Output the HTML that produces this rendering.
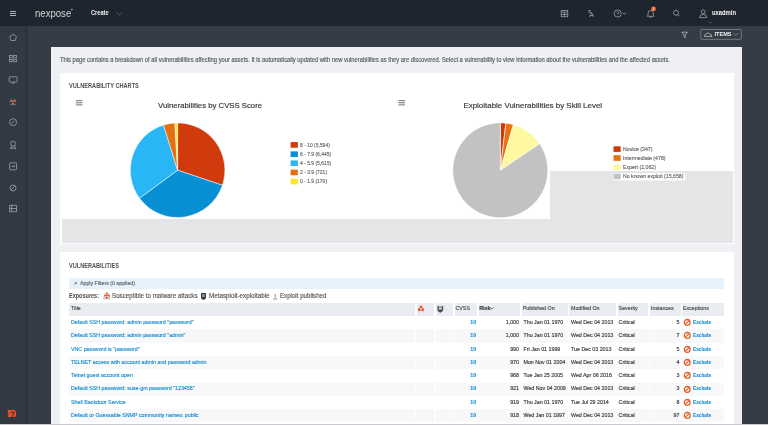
<!DOCTYPE html>
<html><head><meta charset="utf-8">
<style>
*{margin:0;padding:0;box-sizing:border-box}
html,body{width:768px;height:425px;overflow:hidden;background:#353c46;font-family:"Liberation Sans",sans-serif}
body{filter:blur(0.3px)}
.a{position:absolute;white-space:nowrap;-webkit-text-stroke:0.15px currentColor}
#hdr{position:absolute;left:0;top:0;width:768px;height:25.5px;background:#1f252e}
#side{position:absolute;left:0;top:25.5px;width:25px;height:400px;background:#323942}
#sidestrip{position:absolute;left:25px;top:25.5px;width:3px;height:400px;background:#2e343d}
#panel{position:absolute;left:51px;top:47px;width:691px;height:378px;background:#eef0f3}
.card{position:absolute;left:60px;width:674px;background:#fff}
.t{color:#555;font-size:5.3px;line-height:5.3px}
.lnk{color:#1b8ed3}
.hd{color:#555;font-size:5.3px;line-height:5.3px}
.row{position:absolute;left:69px;width:655px;height:13.5px}
.row.g{background:#f6f8fa}
.sep{position:absolute;top:0;width:1px;height:100%;background:#fff}
</style></head><body>
<div id="hdr"></div>
<div id="side"></div>
<div id="sidestrip"></div>

<!-- header left -->
<svg class="a" style="left:0;top:0" width="130" height="25">
  <g fill="#aab0b8"><rect x="10" y="11" width="6" height="1"/><rect x="10" y="13" width="6" height="1"/><rect x="10" y="15" width="6" height="1"/></g>
  <circle cx="71.9" cy="9.6" r="0.8" fill="#bbb"/>
  <path d="M116.5 12.5 L119.3 15 L122.1 12.5" stroke="#5a616b" stroke-width="0.8" fill="none"/>
</svg>
<div class="a" style="-webkit-text-stroke:0;left:34.7px;top:8.6px;font-size:10.2px;line-height:10.2px;color:#d4d7db;transform:scaleX(0.94);transform-origin:0 0">nexpose</div>
<div class="a" style="-webkit-text-stroke:0;left:90.8px;top:9.5px;font-size:6.8px;line-height:6.8px;transform:scaleX(0.83);transform-origin:0 0;color:#eceef0;font-weight:bold">Create</div>

<!-- header right icons -->
<svg class="a" style="left:540;top:0;left:540px" width="228" height="26">
  <g stroke="#aab0b7" stroke-width="0.7" fill="none">
    <!-- table icon -->
    <rect x="21.2" y="10.4" width="6.6" height="6.4"/>
    <line x1="21.2" y1="12.2" x2="27.8" y2="12.2"/><line x1="24.5" y1="12.2" x2="24.5" y2="16.8"/><line x1="21.2" y1="14.5" x2="27.8" y2="14.5"/>
    <!-- translate -->
    <path d="M48.2 10.6 h2.6 M49.5 10.6 v1.2 M48.4 12.2 q1.4 1.6 2.6 0"/>
    <path d="M49.6 17 l2 -4.4 l2 4.4 M50.4 15.5 h2.4"/>
    <!-- help -->
    <circle cx="77.7" cy="13.5" r="3.6"/>
    <path d="M76.5 12.5 q1.2 -1.8 2.4 0 q0 1 -1.2 1.5 v0.6"/>
    <path d="M82.5 12.6 l1.8 1.6 l1.8 -1.6"/>
    <!-- bell -->
    <path d="M107.2 16.3 q0.9 -0.6 0.9 -2.3 v-0.8 q0 -2.8 2.6 -2.9 q2.6 0.1 2.6 2.9 v0.8 q0 1.7 0.9 2.3 z M109.6 17.2 h2.2"/>
    <!-- search -->
    <circle cx="136" cy="12.8" r="2.5"/><line x1="137.8" y1="14.6" x2="139.6" y2="16.4"/>
    <!-- user -->
    <circle cx="163.2" cy="11.8" r="1.9"/>
    <path d="M159.6 17.6 q0 -3.2 3.6 -3.2 q3.6 0 3.6 3.2 z"/>
    <path d="M168.3 21.4 l2 1.8 l2 -1.8" stroke="#59606a"/>
  </g>
  <circle cx="113.5" cy="8.9" r="2.4" fill="#ec6a35"/><path d="M112.9 7.8 h1.2 l-1.2 2 h1.3" stroke="#fde" stroke-width="0.5" fill="none"/>
</svg>
<div class="a" style="-webkit-text-stroke:0;left:712px;top:9.6px;font-size:6.6px;line-height:6.6px;transform:scaleX(0.885);transform-origin:0 0;color:#f4f4f4;font-weight:bold">uxadmin</div>

<!-- toolbar -->
<svg class="a" style="left:670px;top:25px" width="98" height="22">
  <path d="M11.8 7.2 h5.6 l-2.2 2.8 v2.6 l-1.2 -0.8 v-1.8 z" stroke="#b0b5bc" stroke-width="0.8" fill="none"/>
  <rect x="30.8" y="4.5" width="40.5" height="9.8" rx="0.8" stroke="#838992" stroke-width="0.8" fill="none"/>
  <path d="M34.3 11.4 h7.6 q-0.2 -2.2 -2 -2.3 q-1 -1.4 -2.4 -0.9 q-2.4 0.2 -3.2 3.2 z" stroke="#c5c9ce" stroke-width="0.8" fill="none"/>
  <path d="M63.5 8.3 l2.2 2 l2.2 -2" stroke="#9aa0a8" stroke-width="0.8" fill="none"/>
</svg>
<div class="a" style="-webkit-text-stroke:0;left:714.5px;top:31.5px;font-size:5.6px;line-height:5.6px;color:#f0f0f0;font-weight:bold">ITEMS</div>

<!-- sidebar icons -->
<svg class="a" style="left:0;top:25px" width="26" height="400">
  <g stroke="#a3a9b1" stroke-width="0.75" fill="none">
    <path d="M13.1 9.2 l3.4 2.5 l-1.3 3.8 h-4.2 l-1.3 -3.8 z"/>
    <rect x="9.6" y="30.5" width="2.6" height="2.4"/><rect x="13.8" y="30.5" width="2.6" height="2.4"/>
    <rect x="9.6" y="34.4" width="2.6" height="2.4"/><rect x="13.8" y="34.4" width="2.6" height="2.4"/>
    <rect x="9.2" y="51.8" width="7.8" height="5.2" rx="0.6"/><line x1="11.5" y1="58.2" x2="14.7" y2="58.2"/>
    <circle cx="13.1" cy="97.2" r="3.5"/><path d="M11.5 98.8 l3.2 -3.2"/>
    <circle cx="13.1" cy="118.6" r="2.5"/><path d="M11.6 120.8 l-1 3 l2.5 -1 l2.5 1 l-1 -3"/>
    <rect x="9.7" y="137.8" width="6.8" height="7" rx="0.8"/><path d="M11.7 141.5 h2.8 v-1.5"/>
    <circle cx="13.1" cy="163" r="3"/><path d="M11.2 164.8 l3.8 -3.8"/>
    <rect x="9.7" y="180.3" width="6.8" height="6.5"/><line x1="11.8" y1="180.3" x2="11.8" y2="186.8"/><line x1="9.7" y1="183.5" x2="16.5" y2="183.5"/>
  </g>
  <g>
    <path d="M11.3 73.6 L9.8 77.5 M14.5 73.6 L16 77.5 M10 79.7 h5.9" stroke="#8a9099" stroke-width="0.7" fill="none"/>
    <rect x="10.8" y="75.4" width="4.4" height="1.4" fill="#ee6a36"/>
    <rect x="12" y="77.9" width="2" height="1.1" fill="#ee6a36"/>
  </g>
  <path d="M7.8 385 H14 Q16.1 385 16.1 387.6 V389.4 Q16.1 392 13.5 392 H7.8 Z" fill="#f04e1c"/>
  <path d="M10.2 387.2 h4 l-2.2 4.8" stroke="#323942" stroke-width="1.1" fill="none"/>
  <rect x="7.6" y="388.6" width="1.2" height="1" fill="#323942"/>
</svg>

<!-- panel -->
<div id="panel"></div>
<div class="a t" style="left:60.2px;top:57.3px;font-size:6.3px;line-height:6.3px;transform:scaleX(0.918);transform-origin:0 0;color:#55595e">This page contains a breakdown of all vulnerabilities affecting your assets. It is automatically updated with new vulnerabilities as they are discovered. Select a vulnerability to view information about the vulnerabilities and the affected assets.</div>

<!-- charts card -->
<div class="card" style="top:72.5px;height:171.5px"></div>
<div class="a" style="-webkit-text-stroke:0;left:69.2px;top:82.5px;font-size:6.9px;line-height:6.9px;transform:scaleX(0.816);transform-origin:0 0;color:#505050;font-weight:bold">VULNERABILITY CHARTS</div>

<div class="a" style="left:62px;top:219px;width:671px;height:24px;background:#e4e5e7"></div>
<div class="a" style="left:550px;top:170.8px;width:183px;height:48.2px;background:#e4e5e7"></div>

<svg class="a" style="left:0;top:0" width="768" height="425">
  <g fill="#6e7378">
    <rect x="75.8" y="100.2" width="6.6" height="1"/><rect x="75.8" y="102.3" width="6.6" height="1"/><rect x="75.8" y="104.4" width="6.6" height="1"/>
    <rect x="398.4" y="100.2" width="6.6" height="1"/><rect x="398.4" y="102.3" width="6.6" height="1"/><rect x="398.4" y="104.4" width="6.6" height="1"/>
  </g>
  <g stroke="#fff" stroke-width="0.5">
<path d="M177.6,170.2 L177.60,122.90 A47.3,47.3 0 0 1 222.43,185.28 Z" fill="#d03a0c"/>
<path d="M177.6,170.2 L222.43,185.28 A47.3,47.3 0 0 1 139.48,198.20 Z" fill="#0890d5"/>
<path d="M177.6,170.2 L139.48,198.20 A47.3,47.3 0 0 1 163.54,125.04 Z" fill="#29b6f6"/>
<path d="M177.6,170.2 L163.54,125.04 A47.3,47.3 0 0 1 174.88,122.98 Z" fill="#e5700f"/>
<path d="M177.6,170.2 L174.88,122.98 A47.3,47.3 0 0 1 177.60,122.90 Z" fill="#fde82c"/>
  </g>
  <g stroke="#fff" stroke-width="0.6">
<path d="M500.3,170.3 L500.30,122.80 A47.5,47.5 0 0 1 505.87,123.13 Z" fill="#cc3a0a"/>
<path d="M500.3,170.3 L505.87,123.13 A47.5,47.5 0 0 1 513.40,124.64 Z" fill="#e8720f"/>
<path d="M500.3,170.3 L513.40,124.64 A47.5,47.5 0 0 1 539.70,143.77 Z" fill="#fef9a0"/>
<path d="M500.3,170.3 L539.70,143.77 A47.5,47.5 0 1 1 500.30,122.80 Z" fill="#c2c2c2"/>
  </g>
  <!-- legend 1 -->
<rect x="290.6" y="142.1" width="7.3" height="5.6" fill="#d03a0c"/>
<rect x="290.6" y="151.4" width="7.3" height="5.6" fill="#0890d5"/>
<rect x="290.6" y="160.4" width="7.3" height="5.6" fill="#29b6f6"/>
<rect x="290.6" y="169.6" width="7.3" height="5.6" fill="#e5700f"/>
<rect x="290.6" y="178.8" width="7.3" height="5.6" fill="#fde82c"/>
<!-- legend 2 -->
<rect x="613.5" y="146.3" width="7.2" height="5.6" fill="#cc3a0a"/>
<rect x="613.5" y="155.2" width="7.2" height="5.6" fill="#e8720f"/>
<rect x="613.5" y="164.6" width="7.2" height="5.6" fill="#fef9a0"/>
<rect x="612.8" y="173.2" width="72.5" height="7.4" rx="1.5" fill="#fff"/>
<rect x="613.5" y="173.7" width="7.2" height="5.6" fill="#c2c2c2"/>
</svg>
<div class="a" style="left:158.1px;top:101.8px;font-size:7.75px;line-height:7.75px;color:#333">Vulnerabilities by CVSS Score</div>
<div class="a" style="left:463.4px;top:101.8px;font-size:7.95px;line-height:7.95px;color:#333">Exploitable Vulnerabilities by Skill Level</div>
<div class="a" style="left:300px;top:142.7px;font-size:5.6px;line-height:5.6px;transform:scaleX(0.887);transform-origin:0 0;color:#666">8 - 10 (5,594)</div>
<div class="a" style="left:300px;top:152.0px;font-size:5.6px;line-height:5.6px;transform:scaleX(0.887);transform-origin:0 0;color:#666">6 - 7.9 (6,445)</div>
<div class="a" style="left:300px;top:161.0px;font-size:5.6px;line-height:5.6px;transform:scaleX(0.887);transform-origin:0 0;color:#666">4 - 5.9 (5,615)</div>
<div class="a" style="left:300px;top:170.2px;font-size:5.6px;line-height:5.6px;transform:scaleX(0.887);transform-origin:0 0;color:#666">2 - 3.9 (721)</div>
<div class="a" style="left:300px;top:179.4px;font-size:5.6px;line-height:5.6px;transform:scaleX(0.887);transform-origin:0 0;color:#666">0 - 1.9 (170)</div>
<div class="a" style="left:622.8px;top:146.9px;font-size:5.6px;line-height:5.6px;transform:scaleX(0.93);transform-origin:0 0;color:#666">Novice (347)</div>
<div class="a" style="left:622.8px;top:155.8px;font-size:5.6px;line-height:5.6px;transform:scaleX(0.93);transform-origin:0 0;color:#666">Intermediate (478)</div>
<div class="a" style="left:622.8px;top:165.2px;font-size:5.6px;line-height:5.6px;transform:scaleX(0.93);transform-origin:0 0;color:#666">Expert (2,062)</div>
<div class="a" style="left:622.8px;top:174.3px;font-size:5.6px;line-height:5.6px;transform:scaleX(0.93);transform-origin:0 0;color:#666">No known exploit (15,658)</div>

<!-- vulnerabilities card -->
<div class="card" style="top:252px;height:173px"></div>
<div class="a" style="-webkit-text-stroke:0;left:69.1px;top:262.7px;font-size:6.9px;line-height:6.9px;transform:scaleX(0.81);transform-origin:0 0;color:#505050;font-weight:bold">VULNERABILITIES</div>
<div class="a" style="left:69px;top:278px;width:655px;height:10.7px;background:#e6f2fb"></div>
<div class="a" style="left:74.3px;top:280.8px;font-size:5.24px;line-height:5.24px;color:#666">&gt;&nbsp; Apply Filters (0 applied)</div>
<div class="a" style="-webkit-text-stroke:0;left:69.1px;top:292.8px;font-size:6.6px;line-height:6.6px;transform:scaleX(0.836);transform-origin:0 0;color:#4a4a4a;font-weight:bold">Exposures:</div>
<svg class="a" style="left:100px;top:288.4px" width="180" height="14">
  <path d="M5 5.5 L3.8 10.5 M8.8 5.5 L10 10.5 M3.6 10.8 h6.6" stroke="#8d8f94" stroke-width="0.7" fill="none"/>
  <rect x="4.4" y="6.8" width="5" height="1.6" fill="#e8562a"/>
  <rect x="5.6" y="9" width="2.6" height="1.3" fill="#e8562a"/>
  <circle cx="6.9" cy="5.5" r="1.1" fill="#e8562a"/>
  <path d="M101 5 h5 v4.2 q0 2.3 -2.5 2.8 q-2.5 -0.5 -2.5 -2.8 z" fill="#3c3f44"/>
  <path d="M102.2 6.2 h2.6 v2.8 h-2.6 z" fill="#fff" opacity="0.45"/>
  <path d="M173.2 11 h4" stroke="#666" stroke-width="0.8"/><path d="M175.2 6.2 v3.6" stroke="#666" stroke-width="0.8"/>
</svg>
<div class="a" style="left:112px;top:292.6px;font-size:6.9px;line-height:6.9px;transform:scaleX(0.9);transform-origin:0 0;color:#555">Susceptible to malware attacks</div>
<div class="a" style="left:208.5px;top:292.6px;font-size:6.9px;line-height:6.9px;transform:scaleX(0.908);transform-origin:0 0;color:#555">Metasploit-exploitable</div>
<div class="a" style="left:280.2px;top:292.6px;font-size:6.9px;line-height:6.9px;transform:scaleX(0.891);transform-origin:0 0;color:#555">Exploit published</div>

<!--TABLE-->
<div class="a" style="left:69px;top:303px;width:655px;height:13.3px;background:#e9ecf0"></div>
<div class="a" style="left:69px;top:329.47px;width:655px;height:13.27px;background:#f6f8fa"></div>
<div class="a" style="left:69px;top:356.01px;width:655px;height:13.27px;background:#f6f8fa"></div>
<div class="a" style="left:69px;top:382.55px;width:655px;height:13.27px;background:#f6f8fa"></div>
<div class="a" style="left:69px;top:409.09px;width:655px;height:13.27px;background:#f6f8fa"></div>
<div class="a" style="left:415.0px;top:303px;width:1.6px;height:13.2px;background:#fff"></div>
<div class="a" style="left:415.2px;top:316.2px;width:1.2px;height:106.2px;background:rgba(255,255,255,0.75)"></div>
<div class="a" style="left:434.2px;top:303px;width:1.6px;height:13.2px;background:#fff"></div>
<div class="a" style="left:434.4px;top:316.2px;width:1.2px;height:106.2px;background:rgba(255,255,255,0.75)"></div>
<div class="a" style="left:453.1px;top:303px;width:1.6px;height:13.2px;background:#fff"></div>
<div class="a" style="left:453.3px;top:316.2px;width:1.2px;height:106.2px;background:rgba(255,255,255,0.75)"></div>
<div class="a" style="left:477.0px;top:303px;width:1.6px;height:13.2px;background:#fff"></div>
<div class="a" style="left:477.2px;top:316.2px;width:1.2px;height:106.2px;background:rgba(255,255,255,0.75)"></div>
<div class="a" style="left:520.4px;top:303px;width:1.6px;height:13.2px;background:#fff"></div>
<div class="a" style="left:520.6px;top:316.2px;width:1.2px;height:106.2px;background:rgba(255,255,255,0.75)"></div>
<div class="a" style="left:567.8px;top:303px;width:1.6px;height:13.2px;background:#fff"></div>
<div class="a" style="left:568.0px;top:316.2px;width:1.2px;height:106.2px;background:rgba(255,255,255,0.75)"></div>
<div class="a" style="left:616.0px;top:303px;width:1.6px;height:13.2px;background:#fff"></div>
<div class="a" style="left:616.2px;top:316.2px;width:1.2px;height:106.2px;background:rgba(255,255,255,0.75)"></div>
<div class="a" style="left:648.4px;top:303px;width:1.6px;height:13.2px;background:#fff"></div>
<div class="a" style="left:648.6px;top:316.2px;width:1.2px;height:106.2px;background:rgba(255,255,255,0.75)"></div>
<div class="a" style="left:680.5px;top:303px;width:1.6px;height:13.2px;background:#fff"></div>
<div class="a" style="left:680.7px;top:316.2px;width:1.2px;height:106.2px;background:rgba(255,255,255,0.75)"></div>
<div class="a" style="left:71px;top:305.6px;font-size:5.3px;line-height:5.3px;color:#4a4a4a">Title</div>
<div class="a" style="left:455.5px;top:305.6px;font-size:5.3px;line-height:5.3px;color:#4a4a4a">CVSS</div>
<div class="a" style="left:479.2px;top:305.6px;font-size:5.3px;line-height:5.3px;color:#4a4a4a;font-weight:bold;color:#333">Risk</div>
<svg class="a" style="left:489px;top:306px" width="6" height="5"><path d="M1.3 1.6 l1.6 1.5 l1.6 -1.5" stroke="#444" stroke-width="0.8" fill="none"/></svg>
<div class="a" style="left:522.8px;top:305.6px;font-size:5.3px;line-height:5.3px;color:#4a4a4a">Published On</div>
<div class="a" style="left:571px;top:305.6px;font-size:5.3px;line-height:5.3px;color:#4a4a4a">Modified On</div>
<div class="a" style="left:618.6px;top:305.6px;font-size:5.3px;line-height:5.3px;color:#4a4a4a">Severity</div>
<div class="a" style="left:651px;top:305.6px;font-size:5.3px;line-height:5.3px;color:#4a4a4a">Instances</div>
<div class="a" style="left:683px;top:305.6px;font-size:5.3px;line-height:5.3px;color:#4a4a4a">Exceptions</div>
<svg class="a" style="left:415px;top:303px" width="30" height="13"><g fill="#e8592c"><circle cx="6" cy="3.9" r="1.5"/><circle cx="4.4" cy="6.6" r="1.5"/><circle cx="7.6" cy="6.6" r="1.5"/></g><circle cx="6" cy="5.7" r="0.8" fill="#e9ecf0"/><path d="M3.4 8.8 h1.4 M7.2 8.8 h1.4" stroke="#9a9ca0" stroke-width="0.6"/><path d="M22.4 2.4 l1.2 1 h3.4 l1.2 -1 v4.4 q0 2.2 -2.9 2.9 q-2.9 -0.7 -2.9 -2.9 z" fill="#505358"/><path d="M23.8 4.4 h3 v2 h-3 z" fill="#d9dce0"/></svg>
<div class="a" style="left:71px;top:320.10px;font-size:5.3px;line-height:5.3px;color:#1b8ed3">Default SSH password: admin password &quot;password&quot;</div>
<div class="a" style="right:291.8px;top:320.10px;font-size:5.3px;line-height:5.3px;color:#1b8ed3;font-weight:bold;-webkit-text-stroke:0.1px currentColor">10</div>
<div class="a" style="right:249.0px;top:320.10px;font-size:5.3px;line-height:5.3px;color:#3a3a3a">1,000</div>
<div class="a" style="left:523.5px;top:320.10px;font-size:5.3px;line-height:5.3px;color:#3a3a3a">Thu Jan 01 1970</div>
<div class="a" style="left:571px;top:320.10px;font-size:5.3px;line-height:5.3px;color:#3a3a3a">Wed Dec 04 2013</div>
<div class="a" style="left:618.6px;top:320.10px;font-size:5.3px;line-height:5.3px;color:#3a3a3a">Critical</div>
<div class="a" style="right:88.5px;top:320.10px;font-size:5.3px;line-height:5.3px;color:#3a3a3a">5</div>
<div class="a" style="left:692.9px;top:320.10px;font-size:5.3px;line-height:5.3px;color:#1b8ed3;font-weight:bold;-webkit-text-stroke:0.1px currentColor;transform:scaleX(0.89);transform-origin:0 0">Exclude</div>
<svg class="a" style="left:683px;top:316.20px" width="9" height="14"><circle cx="4.2" cy="6.4" r="2.9" fill="#fff3ec" stroke="#e2602a" stroke-width="1.3"/><line x1="2.4" y1="8.2" x2="6" y2="4.6" stroke="#e2602a" stroke-width="1.1"/></svg>
<div class="a" style="left:71px;top:333.37px;font-size:5.3px;line-height:5.3px;color:#1b8ed3">Default SSH password: admin password &quot;admin&quot;</div>
<div class="a" style="right:291.8px;top:333.37px;font-size:5.3px;line-height:5.3px;color:#1b8ed3;font-weight:bold;-webkit-text-stroke:0.1px currentColor">10</div>
<div class="a" style="right:249.0px;top:333.37px;font-size:5.3px;line-height:5.3px;color:#3a3a3a">1,000</div>
<div class="a" style="left:523.5px;top:333.37px;font-size:5.3px;line-height:5.3px;color:#3a3a3a">Thu Jan 01 1970</div>
<div class="a" style="left:571px;top:333.37px;font-size:5.3px;line-height:5.3px;color:#3a3a3a">Wed Dec 04 2013</div>
<div class="a" style="left:618.6px;top:333.37px;font-size:5.3px;line-height:5.3px;color:#3a3a3a">Critical</div>
<div class="a" style="right:88.5px;top:333.37px;font-size:5.3px;line-height:5.3px;color:#3a3a3a">7</div>
<div class="a" style="left:692.9px;top:333.37px;font-size:5.3px;line-height:5.3px;color:#1b8ed3;font-weight:bold;-webkit-text-stroke:0.1px currentColor;transform:scaleX(0.89);transform-origin:0 0">Exclude</div>
<svg class="a" style="left:683px;top:329.47px" width="9" height="14"><circle cx="4.2" cy="6.4" r="2.9" fill="#fff3ec" stroke="#e2602a" stroke-width="1.3"/><line x1="2.4" y1="8.2" x2="6" y2="4.6" stroke="#e2602a" stroke-width="1.1"/></svg>
<div class="a" style="left:71px;top:346.64px;font-size:5.3px;line-height:5.3px;color:#1b8ed3">VNC password is &quot;password&quot;</div>
<div class="a" style="right:291.8px;top:346.64px;font-size:5.3px;line-height:5.3px;color:#1b8ed3;font-weight:bold;-webkit-text-stroke:0.1px currentColor">10</div>
<div class="a" style="right:249.0px;top:346.64px;font-size:5.3px;line-height:5.3px;color:#3a3a3a">990</div>
<div class="a" style="left:523.5px;top:346.64px;font-size:5.3px;line-height:5.3px;color:#3a3a3a">Fri Jan 01 1999</div>
<div class="a" style="left:571px;top:346.64px;font-size:5.3px;line-height:5.3px;color:#3a3a3a">Tue Dec 03 2013</div>
<div class="a" style="left:618.6px;top:346.64px;font-size:5.3px;line-height:5.3px;color:#3a3a3a">Critical</div>
<div class="a" style="right:88.5px;top:346.64px;font-size:5.3px;line-height:5.3px;color:#3a3a3a">5</div>
<div class="a" style="left:692.9px;top:346.64px;font-size:5.3px;line-height:5.3px;color:#1b8ed3;font-weight:bold;-webkit-text-stroke:0.1px currentColor;transform:scaleX(0.89);transform-origin:0 0">Exclude</div>
<svg class="a" style="left:683px;top:342.74px" width="9" height="14"><circle cx="4.2" cy="6.4" r="2.9" fill="#fff3ec" stroke="#e2602a" stroke-width="1.3"/><line x1="2.4" y1="8.2" x2="6" y2="4.6" stroke="#e2602a" stroke-width="1.1"/></svg>
<div class="a" style="left:71px;top:359.91px;font-size:5.3px;line-height:5.3px;color:#1b8ed3">TELNET access with account admin and password admin</div>
<div class="a" style="right:291.8px;top:359.91px;font-size:5.3px;line-height:5.3px;color:#1b8ed3;font-weight:bold;-webkit-text-stroke:0.1px currentColor">10</div>
<div class="a" style="right:249.0px;top:359.91px;font-size:5.3px;line-height:5.3px;color:#3a3a3a">970</div>
<div class="a" style="left:523.5px;top:359.91px;font-size:5.3px;line-height:5.3px;color:#3a3a3a">Mon Nov 01 2004</div>
<div class="a" style="left:571px;top:359.91px;font-size:5.3px;line-height:5.3px;color:#3a3a3a">Wed Dec 04 2013</div>
<div class="a" style="left:618.6px;top:359.91px;font-size:5.3px;line-height:5.3px;color:#3a3a3a">Critical</div>
<div class="a" style="right:88.5px;top:359.91px;font-size:5.3px;line-height:5.3px;color:#3a3a3a">4</div>
<div class="a" style="left:692.9px;top:359.91px;font-size:5.3px;line-height:5.3px;color:#1b8ed3;font-weight:bold;-webkit-text-stroke:0.1px currentColor;transform:scaleX(0.89);transform-origin:0 0">Exclude</div>
<svg class="a" style="left:683px;top:356.01px" width="9" height="14"><circle cx="4.2" cy="6.4" r="2.9" fill="#fff3ec" stroke="#e2602a" stroke-width="1.3"/><line x1="2.4" y1="8.2" x2="6" y2="4.6" stroke="#e2602a" stroke-width="1.1"/></svg>
<div class="a" style="left:71px;top:373.18px;font-size:5.3px;line-height:5.3px;color:#1b8ed3">Telnet guest account open</div>
<div class="a" style="right:291.8px;top:373.18px;font-size:5.3px;line-height:5.3px;color:#1b8ed3;font-weight:bold;-webkit-text-stroke:0.1px currentColor">10</div>
<div class="a" style="right:249.0px;top:373.18px;font-size:5.3px;line-height:5.3px;color:#3a3a3a">968</div>
<div class="a" style="left:523.5px;top:373.18px;font-size:5.3px;line-height:5.3px;color:#3a3a3a">Tue Jan 25 2005</div>
<div class="a" style="left:571px;top:373.18px;font-size:5.3px;line-height:5.3px;color:#3a3a3a">Wed Apr 06 2016</div>
<div class="a" style="left:618.6px;top:373.18px;font-size:5.3px;line-height:5.3px;color:#3a3a3a">Critical</div>
<div class="a" style="right:88.5px;top:373.18px;font-size:5.3px;line-height:5.3px;color:#3a3a3a">3</div>
<div class="a" style="left:692.9px;top:373.18px;font-size:5.3px;line-height:5.3px;color:#1b8ed3;font-weight:bold;-webkit-text-stroke:0.1px currentColor;transform:scaleX(0.89);transform-origin:0 0">Exclude</div>
<svg class="a" style="left:683px;top:369.28px" width="9" height="14"><circle cx="4.2" cy="6.4" r="2.9" fill="#fff3ec" stroke="#e2602a" stroke-width="1.3"/><line x1="2.4" y1="8.2" x2="6" y2="4.6" stroke="#e2602a" stroke-width="1.1"/></svg>
<div class="a" style="left:71px;top:386.45px;font-size:5.3px;line-height:5.3px;color:#1b8ed3">Default SSH password: suse-gm password &quot;123456&quot;</div>
<div class="a" style="right:291.8px;top:386.45px;font-size:5.3px;line-height:5.3px;color:#1b8ed3;font-weight:bold;-webkit-text-stroke:0.1px currentColor">10</div>
<div class="a" style="right:249.0px;top:386.45px;font-size:5.3px;line-height:5.3px;color:#3a3a3a">921</div>
<div class="a" style="left:523.5px;top:386.45px;font-size:5.3px;line-height:5.3px;color:#3a3a3a">Wed Nov 04 2009</div>
<div class="a" style="left:571px;top:386.45px;font-size:5.3px;line-height:5.3px;color:#3a3a3a">Wed Dec 04 2013</div>
<div class="a" style="left:618.6px;top:386.45px;font-size:5.3px;line-height:5.3px;color:#3a3a3a">Critical</div>
<div class="a" style="right:88.5px;top:386.45px;font-size:5.3px;line-height:5.3px;color:#3a3a3a">3</div>
<div class="a" style="left:692.9px;top:386.45px;font-size:5.3px;line-height:5.3px;color:#1b8ed3;font-weight:bold;-webkit-text-stroke:0.1px currentColor;transform:scaleX(0.89);transform-origin:0 0">Exclude</div>
<svg class="a" style="left:683px;top:382.55px" width="9" height="14"><circle cx="4.2" cy="6.4" r="2.9" fill="#fff3ec" stroke="#e2602a" stroke-width="1.3"/><line x1="2.4" y1="8.2" x2="6" y2="4.6" stroke="#e2602a" stroke-width="1.1"/></svg>
<div class="a" style="left:71px;top:399.72px;font-size:5.3px;line-height:5.3px;color:#1b8ed3">Shell Backdoor Service</div>
<div class="a" style="right:291.8px;top:399.72px;font-size:5.3px;line-height:5.3px;color:#1b8ed3;font-weight:bold;-webkit-text-stroke:0.1px currentColor">10</div>
<div class="a" style="right:249.0px;top:399.72px;font-size:5.3px;line-height:5.3px;color:#3a3a3a">919</div>
<div class="a" style="left:523.5px;top:399.72px;font-size:5.3px;line-height:5.3px;color:#3a3a3a">Thu Jan 01 1970</div>
<div class="a" style="left:571px;top:399.72px;font-size:5.3px;line-height:5.3px;color:#3a3a3a">Tue Jul 29 2014</div>
<div class="a" style="left:618.6px;top:399.72px;font-size:5.3px;line-height:5.3px;color:#3a3a3a">Critical</div>
<div class="a" style="right:88.5px;top:399.72px;font-size:5.3px;line-height:5.3px;color:#3a3a3a">8</div>
<div class="a" style="left:692.9px;top:399.72px;font-size:5.3px;line-height:5.3px;color:#1b8ed3;font-weight:bold;-webkit-text-stroke:0.1px currentColor;transform:scaleX(0.89);transform-origin:0 0">Exclude</div>
<svg class="a" style="left:683px;top:395.82px" width="9" height="14"><circle cx="4.2" cy="6.4" r="2.9" fill="#fff3ec" stroke="#e2602a" stroke-width="1.3"/><line x1="2.4" y1="8.2" x2="6" y2="4.6" stroke="#e2602a" stroke-width="1.1"/></svg>
<div class="a" style="left:71px;top:412.99px;font-size:5.3px;line-height:5.3px;color:#1b8ed3">Default or Guessable SNMP community names: public</div>
<div class="a" style="right:291.8px;top:412.99px;font-size:5.3px;line-height:5.3px;color:#1b8ed3;font-weight:bold;-webkit-text-stroke:0.1px currentColor">10</div>
<div class="a" style="right:249.0px;top:412.99px;font-size:5.3px;line-height:5.3px;color:#3a3a3a">918</div>
<div class="a" style="left:523.5px;top:412.99px;font-size:5.3px;line-height:5.3px;color:#3a3a3a">Wed Jan 01 1997</div>
<div class="a" style="left:571px;top:412.99px;font-size:5.3px;line-height:5.3px;color:#3a3a3a">Wed Dec 04 2013</div>
<div class="a" style="left:618.6px;top:412.99px;font-size:5.3px;line-height:5.3px;color:#3a3a3a">Critical</div>
<div class="a" style="right:88.5px;top:412.99px;font-size:5.3px;line-height:5.3px;color:#3a3a3a">97</div>
<div class="a" style="left:692.9px;top:412.99px;font-size:5.3px;line-height:5.3px;color:#1b8ed3;font-weight:bold;-webkit-text-stroke:0.1px currentColor;transform:scaleX(0.89);transform-origin:0 0">Exclude</div>
<svg class="a" style="left:683px;top:409.09px" width="9" height="14"><circle cx="4.2" cy="6.4" r="2.9" fill="#fff3ec" stroke="#e2602a" stroke-width="1.3"/><line x1="2.4" y1="8.2" x2="6" y2="4.6" stroke="#e2602a" stroke-width="1.1"/></svg>
<!--/TABLE-->

<div class="a" style="left:0;top:423.5px;width:768px;height:1.5px;background:#c8cacd"></div>
</body></html>
